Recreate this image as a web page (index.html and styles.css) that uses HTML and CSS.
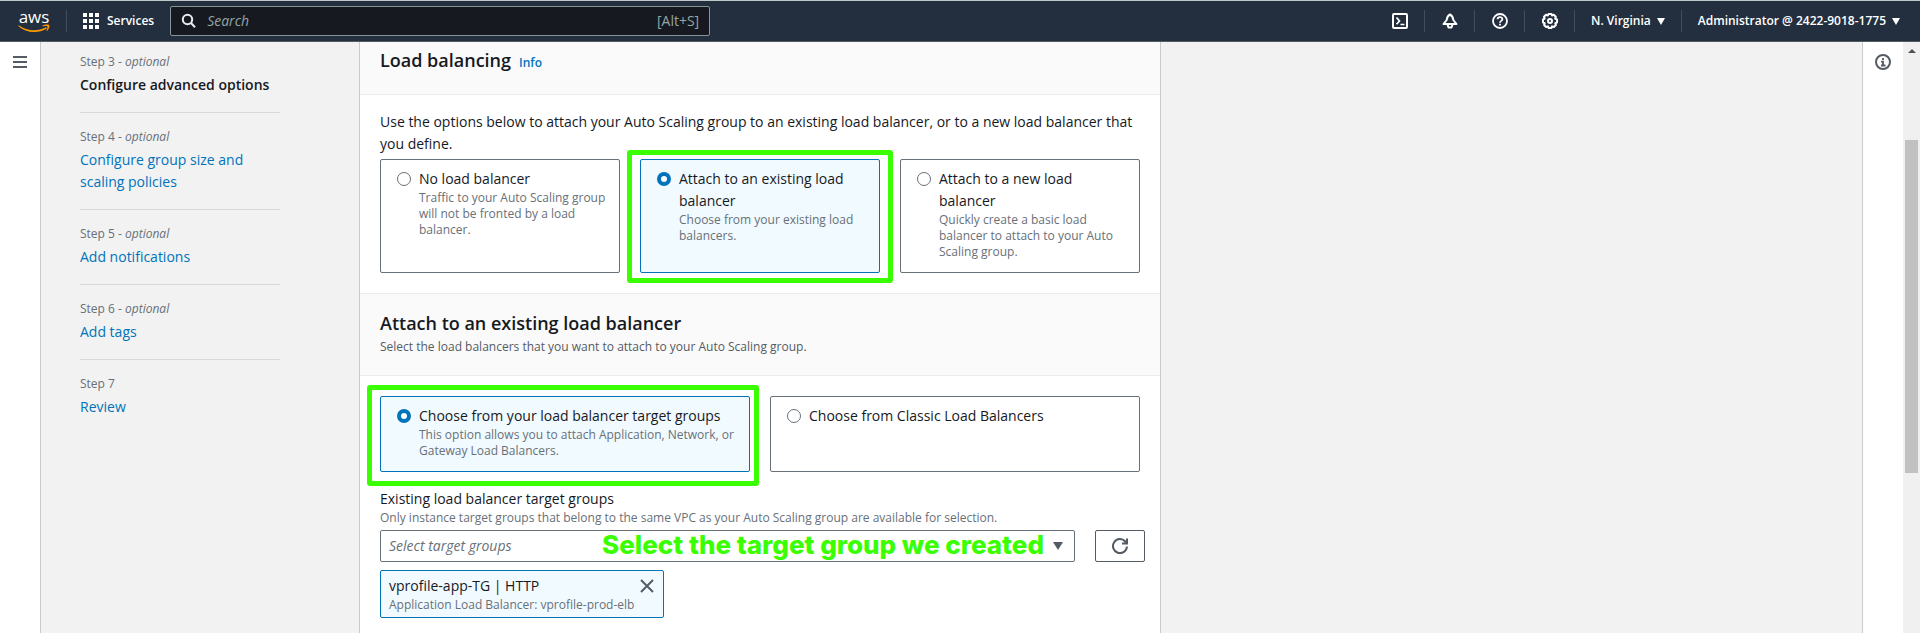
FILE: index.html
```html
<!DOCTYPE html>
<html lang="en">
<head>
<meta charset="utf-8">
<title>Create Auto Scaling group</title>
<link rel="stylesheet" href="styles.css">
</head>
<body>
<header class="topbar">
  <a class="logo" href="#" aria-label="aws">
    <span class="logo-text">aws</span>
    <svg class="logo-smile" viewBox="0 0 32 9" aria-hidden="true"><path d="M0.6 1.2C9 7.4 20 7.6 28 3.2l.8 1.2C20.500 9.600 8 9.300.2 1.900z" fill="#f90"/><path d="M24.600 1.500C27 .2 30.600.1 31.200.9c.6.9-.2 4.400-2.200 6.100-.3.200-.6.100-.5-.3.500-1.200 1.300-3.600.9-4.200-.5-.6-3.100-.4-4.400-.2-.500.100-.7-.5-.4-.800z" fill="#f90"/></svg>
  </a>
  <span class="divider"></span>
  <button class="services" type="button">
    <svg width="16" height="16" viewBox="0 0 16 16" fill="#fff" aria-hidden="true"><path d="M0 0h4v4H0zM6 0h4v4H6zM12 0h4v4h-4zM0 6h4v4H0zM6 6h4v4H6zM12 6h4v4h-4zM0 12h4v4H0zM6 12h4v4H6zM12 12h4v4h-4z"/></svg>
    Services
  </button>
  <label class="search">
    <svg width="16" height="16" viewBox="0 0 16 16" fill="none" stroke="#eaeded" stroke-width="2" aria-hidden="true"><circle cx="6.500" cy="6.500" r="4.700"/><path d="M10 10l4 4.300"/></svg>
    <input type="search" placeholder="Search" aria-label="Search">
    <span>[Alt+S]</span>
  </label>
  <nav class="tools">
    <button class="tool" type="button" aria-label="CloudShell"><svg width="16" height="16" viewBox="0 0 16 16" fill="none" stroke="#fff" stroke-width="2" aria-hidden="true"><rect x="1" y="1" width="14" height="14" rx="1"/><path d="M4.500 4.500L7.500 8l-3 3.300M8.500 11.500h4" stroke-width="1.700"/></svg></button>
    <button class="tool" type="button" aria-label="Notifications"><svg width="16" height="16" viewBox="0 0 16 16" fill="none" stroke="#fff" stroke-width="2" stroke-linejoin="round" aria-hidden="true"><path d="M8 1.500C6 2.500 5 4 4.700 7L1.500 11h13L11.300 7C11 4 10 2.500 8 1.500z"/><path d="M5.500 11.500L6.500 14.500h3l1-3"/></svg></button>
    <button class="tool" type="button" aria-label="Help"><svg width="16" height="16" viewBox="0 0 16 16" fill="none" stroke="#fff" stroke-width="1.800" aria-hidden="true"><circle cx="8" cy="8" r="7"/><path d="M5.600 6.300C5.600 3.500 10.400 3.500 10.400 6.300 10.400 7.900 8 7.900 8 9.700M8 10.700v1.700"/></svg></button>
    <button class="tool" type="button" aria-label="Settings"><svg width="16" height="16" viewBox="0 0 16 16" fill="none" stroke="#fff" stroke-width="2" stroke-linejoin="round" aria-hidden="true"><path d="M6.500 1h3l.5 1.500 1.800-.7 2 2-.7 1.900 1.900.8v3l-1.700.6.600 1.900-2 2-1.900-.6-.5 1.600h-3L6 13.400l-1.900.6-2-2 .6-1.900L1 9.500v-3l1.700-.8L2 3.800l2-2 1.900.7z"/><circle cx="8" cy="8" r="2"/></svg></button>
    <button class="menu region" type="button">N. Virginia <svg width="8" height="7" viewBox="0 0 8 7" aria-hidden="true"><path d="M0 0h8L4 7z" fill="#fff"/></svg></button>
    <button class="menu account" type="button">Administrator @ 2422-9018-1775 <svg width="8" height="7" viewBox="0 0 8 7" aria-hidden="true"><path d="M0 0h8L4 7z" fill="#fff"/></svg></button>
  </nav>
</header>

<div class="shell">
  <aside class="rail rail-left">
    <button type="button" aria-label="Open navigation"><svg width="14" height="14" viewBox="0 0 14 14" aria-hidden="true"><path d="M0 2h14M0 7h14M0 12h14" stroke="#545b64" stroke-width="2"/></svg></button>
  </aside>

  <main class="content">
    <ol class="steps">
      <li><span class="step-no">Step 3 - <i>optional</i></span><strong>Configure advanced options</strong></li>
      <li><span class="step-no">Step 4 - <i>optional</i></span><a href="#">Configure group size and scaling policies</a></li>
      <li><span class="step-no">Step 5 - <i>optional</i></span><a href="#">Add notifications</a></li>
      <li><span class="step-no">Step 6 - <i>optional</i></span><a href="#">Add tags</a></li>
      <li><span class="step-no">Step 7</span><a href="#">Review</a></li>
    </ol>

    <section class="panel">
      <div class="panel-head first">
        <h2>Load balancing</h2>
        <a class="info" href="#">Info</a>
      </div>
      <div class="panel-body intro">
        <p>Use the options below to attach your Auto Scaling group to an existing load balancer, or to a new load balancer that you define.</p>
        <div class="tiles three">
          <label class="tile">
            <input type="radio" name="lb">
            <span class="tile-text"><span class="tile-title">No load balancer</span><small>Traffic to your Auto Scaling group will not be fronted by a load balancer.</small></span>
          </label>
          <label class="tile selected">
            <input type="radio" name="lb" checked>
            <span class="tile-text"><span class="tile-title">Attach to an existing load balancer</span><small>Choose from your existing load balancers.</small></span>
            <span class="mark"></span>
          </label>
          <label class="tile">
            <input type="radio" name="lb">
            <span class="tile-text"><span class="tile-title">Attach to a new load balancer</span><small>Quickly create a basic load balancer to attach to your Auto Scaling group.</small></span>
          </label>
        </div>
      </div>

      <div class="panel-head second">
        <h2>Attach to an existing load balancer</h2>
        <p class="hint">Select the load balancers that you want to attach to your Auto Scaling group.</p>
      </div>
      <div class="panel-body">
        <div class="tiles two">
          <label class="tile selected">
            <input type="radio" name="source" checked>
            <span class="tile-text"><span class="tile-title">Choose from your load balancer target groups</span><small>This option allows you to attach Application, Network, or Gateway Load Balancers.</small></span>
            <span class="mark wide"></span>
          </label>
          <label class="tile">
            <input type="radio" name="source">
            <span class="tile-text"><span class="tile-title">Choose from Classic Load Balancers</span></span>
          </label>
        </div>

        <div class="field">
          <label for="groups">Existing load balancer target groups</label>
          <p class="hint">Only instance target groups that belong to the same VPC as your Auto Scaling group are available for selection.</p>
          <div class="picker">
            <div class="select">
              <select id="groups"><option>Select target groups</option></select>
              <svg class="caret" width="10" height="8" viewBox="0 0 10 8" aria-hidden="true"><path d="M0 0h10L5 8z" fill="#545b64"/></svg>
              <span class="note">Select the target group we created</span>
            </div>
            <button class="refresh" type="button" aria-label="Refresh"><svg width="16" height="16" viewBox="0 0 16 16" fill="none" stroke="#545b64" stroke-width="2" aria-hidden="true"><path d="M15 8.500A7 7 0 1 1 13.300 3.500L14.500 5M15 .5v5H10"/></svg></button>
          </div>
          <div class="token">
            <div><span class="token-title">vprofile-app-TG | HTTP</span><small>Application Load Balancer: vprofile-prod-elb</small></div>
            <button type="button" aria-label="Remove vprofile-app-TG"><svg width="14" height="14" viewBox="0 0 14 14" aria-hidden="true"><path d="M1 1l12 12M13 1L1 13" stroke="#545b64" stroke-width="2"/></svg></button>
          </div>
        </div>
      </div>
    </section>
  </main>

  <aside class="rail rail-right">
    <button type="button" aria-label="Open help panel"><svg width="16" height="16" viewBox="0 0 16 16" fill="none" stroke="#545b64" stroke-width="2" aria-hidden="true"><circle cx="8" cy="8" r="7"/><path d="M8 4v2M6 7.700h2V12M6 11.500h4.500" stroke-width="1.800"/></svg></button>
  </aside>
  <div class="scrollbar"><span class="up"></span><span class="thumb"></span></div>
</div>
</body>
</html>
```

FILE: styles.css
```css
* { box-sizing: border-box; }

body {
  margin: 0;
  height: 100vh;
  display: flex;
  flex-direction: column;
  overflow: hidden;
  background: #f2f2f2;
  color: #16191f;
  font: 14px/22px "Open Sans", "Noto Sans", sans-serif;
}

h2, p, ol { margin: 0; }
button { border: 0; padding: 0; background: none; font: inherit; color: inherit; cursor: pointer; }
a { color: #0073bb; text-decoration: none; }
svg { display: block; flex: none; }
small, .hint { display: block; font-size: 12px; line-height: 16px; color: #687078; }

/* top bar */
.topbar {
  flex: none;
  height: 42px;
  display: flex;
  align-items: center;
  background: #232f3e;
  border-top: 1px solid #bfc8c8;
  border-bottom: 1px solid #545b64;
  color: #fff;
  font-size: 12px;
  font-weight: 600;
}
.logo { display: flex; flex-direction: column; align-items: center; width: 32px; margin-left: 18px; color: #fff; }
.logo-text { font: 500 17px/14px "Open Sans", sans-serif; }
.logo-smile { width: 32px; height: 9px; }
.divider { width: 1px; height: 22px; margin: 0 16px; background: #414d5c; }
.services { display: flex; align-items: center; gap: 8px; }
.search {
  flex: 0 1 540px;
  height: 30px;
  margin-left: 16px;
  padding: 0 10px;
  display: flex;
  align-items: center;
  gap: 10px;
  background: #161a20;
  border: 1px solid #879596;
  border-radius: 2px;
  color: #95a5a6;
  font-size: 14px;
  font-weight: 400;
}
.search input { flex: 1; min-width: 0; padding: 0; border: 0; outline: 0; background: none; color: #fff; font: inherit; }
.search input::placeholder { color: #95a5a6; font-style: italic; opacity: 1; }
.tools { display: flex; align-items: center; margin-left: auto; }
.tool, .menu { height: 22px; display: flex; align-items: center; justify-content: center; border-right: 1px solid #414d5c; white-space: nowrap; }
.tool { width: 50px; }
.menu { gap: 6px; padding: 0 16px; }
.account { border-right: 0; padding-right: 20px; }

/* page frame */
.shell { flex: 1; min-height: 0; display: flex; }
.rail { flex: none; width: 41px; background: #fff; display: flex; justify-content: center; align-items: flex-start; }
.rail-left { border-right: 1px solid #c8cbcb; padding-top: 13px; }
.rail-right { border-left: 1px solid #c8cbcb; padding-top: 12px; }
.scrollbar { flex: none; width: 17px; padding: 7px 2px 0; background: #f0f0f0; }
.up { display: block; width: 0; margin: 0 auto; border: 4px solid transparent; border-top: 0; border-bottom-color: #505050; }
.thumb { display: block; height: 57%; margin-top: 87px; background: #c1c1c1; }
.content { flex: 1; min-width: 0; display: grid; grid-template-columns: 318px minmax(0, 802px) 1fr; overflow: hidden; }

/* wizard steps */
.steps { list-style: none; padding: 12px 79px 0 39px; }
.steps li { padding-bottom: 16px; }
.steps li + li { padding-top: 16px; border-top: 1px solid #d5dbdb; }
.step-no { display: block; margin-bottom: 4px; font-size: 12px; line-height: 16px; color: #687078; }
.steps strong, .steps a { display: block; }
.steps strong { font-weight: 600; }

/* panel */
.panel { background: #fff; border: 1px solid #c8cbcb; border-width: 0 1px; }
.panel-head { background: #fafafa; border-bottom: 1px solid #eaeded; }
.panel h2 { font-size: 18px; line-height: 24px; font-weight: 600; }
.first { display: flex; align-items: baseline; gap: 8px; padding: 6px 20px 22px; }
.info { font-size: 12px; line-height: 16px; font-weight: 600; }
.second { border-top: 1px solid #eaeded; padding: 17px 20px 20px; }
.second .hint { margin-top: 4px; color: #545b64; }
.panel-body { padding: 20px; }
.intro { padding-top: 16px; }

.tiles { display: grid; gap: 20px; }
.three { grid-template-columns: repeat(3, 1fr); margin-top: 4px; }
.two { grid-template-columns: repeat(2, 1fr); }
.tile { position: relative; display: flex; align-items: flex-start; gap: 8px; padding: 8px 8px 12px 16px; border: 1px solid #687078; border-radius: 2px; }
.tile.selected { background: #f1faff; border-color: #0073bb; }
.tile-title, .token-title { display: block; }
.tile input { appearance: none; flex: none; width: 14px; height: 14px; margin: 4px 0; border: 1px solid #687078; border-radius: 50%; background: #fff; }
.tile input:checked { border: 4px solid #0073bb; }
.mark { position: absolute; inset: -10px -14px -11px; border: 5px solid #3aff00; border-radius: 3px; pointer-events: none; }
.mark.wide { inset: -12px -10px -15px -14px; }

/* target groups */
.field { margin-top: 16px; }
.field > label { display: block; }
.picker { display: flex; gap: 20px; margin: 4px -5px 0 0; }
.select { position: relative; flex: 1; }
.select select { appearance: none; display: block; width: 100%; height: 32px; padding: 0 30px 0 8px; border: 1px solid #687078; border-radius: 2px; background: #fff; color: #687078; font: inherit; font-style: italic; }
.caret { position: absolute; right: 12px; top: 12px; pointer-events: none; }
.note { position: absolute; right: 31px; top: 0; color: #3aff00; font: 800 26px/30px Inter, sans-serif; white-space: nowrap; pointer-events: none; }
.refresh { width: 50px; height: 32px; display: flex; align-items: center; justify-content: center; border: 1px solid #545b64; border-radius: 2px; }
.token { width: 284px; margin-top: 8px; padding: 4px 8px; display: flex; justify-content: space-between; align-items: flex-start; background: #f1faff; border: 1px solid #0073bb; border-radius: 2px; }
.token small { white-space: nowrap; }
.token button { margin: 4px 1px 0 0; }
```
